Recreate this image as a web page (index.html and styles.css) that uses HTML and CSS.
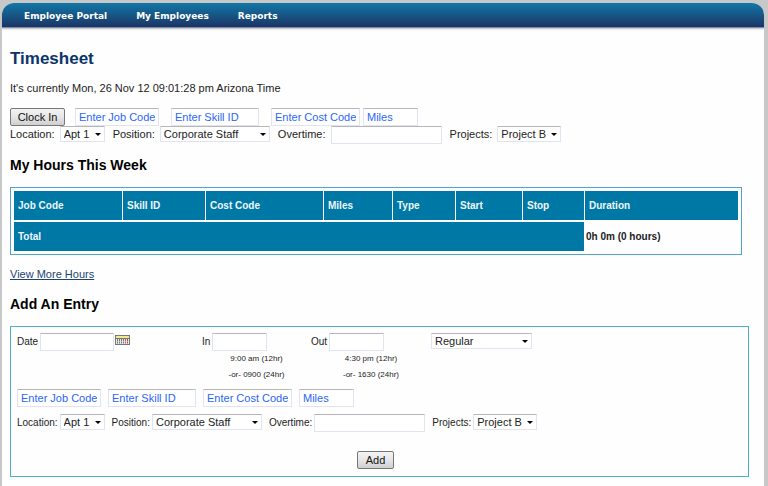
FILE: index.html
```html
<!DOCTYPE html>
<html lang="en">

<head>
  <meta charset="UTF-8">
  <title>Timesheet</title>
  <link rel="stylesheet" href="styles.css">
</head>

<body>
  <div class="page">
    <nav class="nav">
      <a href="#">Employee Portal</a>
      <a href="#">My Employees</a>
      <a href="#">Reports</a>
    </nav>

    <main class="content">
      <h1>Timesheet</h1>
      <p class="clock">It's currently Mon, 26 Nov 12 09:01:28 pm Arizona Time</p>

      <form class="clock-form">
        <div class="row">
          <button type="button" class="btn btn-clock">Clock In</button>
          <input type="text" class="field job" placeholder="Enter Job Code" aria-label="Job Code">
          <input type="text" class="field skill" placeholder="Enter Skill ID" aria-label="Skill ID">
          <input type="text" class="field cost" placeholder="Enter Cost Code" aria-label="Cost Code">
          <input type="text" class="field miles" placeholder="Miles" aria-label="Miles">
        </div>
        <div class="row options">
          <div class="option">
            <label for="location">Location:</label>
            <span class="select location"><select id="location"><option>Apt 1</option></select></span>
          </div>
          <div class="option">
            <label for="position">Position:</label>
            <span class="select position"><select id="position"><option>Corporate Staff</option></select></span>
          </div>
          <div class="option">
            <label for="overtime">Overtime:</label>
            <input type="text" class="field overtime" id="overtime">
          </div>
          <div class="option">
            <label for="project">Projects:</label>
            <span class="select project"><select id="project"><option>Project B</option></select></span>
          </div>
        </div>
      </form>

      <h2>My Hours This Week</h2>
      <table class="hours">
        <thead>
          <tr>
            <th class="col-job">Job Code</th>
            <th class="col-skill">Skill ID</th>
            <th class="col-cost">Cost Code</th>
            <th class="col-miles">Miles</th>
            <th class="col-type">Type</th>
            <th class="col-start">Start</th>
            <th class="col-stop">Stop</th>
            <th>Duration</th>
          </tr>
        </thead>
        <tbody>
          <tr>
            <th colspan="7">Total</th>
            <td>0h 0m (0 hours)</td>
          </tr>
        </tbody>
      </table>
      <p class="more"><a href="#">View More Hours</a></p>

      <h2>Add An Entry</h2>
      <form class="entry">
        <div class="times">
          <div class="time date">
            <label for="date">Date</label>
            <input type="text" class="field" id="date">
            <svg class="calendar" width="15" height="11" viewBox="0 0 15 11" aria-hidden="true">
              <rect x="0.5" y="0.5" width="14" height="9" fill="#ece8e8" stroke="#777"/>
              <rect x="1" y="1" width="13" height="2" fill="#f0eb90"/>
              <path d="M1 3.5H14" stroke="#777"/>
              <path d="M2 5H12M2 7.5H12" stroke="#777" stroke-width="2" stroke-dasharray="1 1"/>
              <path d="M12 5H13M12 7.5H13" stroke="#e33" stroke-width="2"/>
            </svg>
          </div>
          <div class="time">
            <label for="in">In</label>
            <input type="text" class="field" id="in">
            <p class="hint">9:00 am (12hr)<br>-or- 0900 (24hr)</p>
          </div>
          <div class="time">
            <label for="out">Out</label>
            <input type="text" class="field" id="out">
            <p class="hint">4:30 pm (12hr)<br>-or- 1630 (24hr)</p>
          </div>
          <div class="time">
            <span class="select type"><select aria-label="Type"><option>Regular</option></select></span>
          </div>
        </div>

        <div class="row codes">
          <input type="text" class="field job" placeholder="Enter Job Code" aria-label="Job Code">
          <input type="text" class="field skill" placeholder="Enter Skill ID" aria-label="Skill ID">
          <input type="text" class="field cost" placeholder="Enter Cost Code" aria-label="Cost Code">
          <input type="text" class="field miles" placeholder="Miles" aria-label="Miles">
        </div>

        <div class="row options">
          <div class="option">
            <label for="entry-location">Location:</label>
            <span class="select location"><select id="entry-location"><option>Apt 1</option></select></span>
          </div>
          <div class="option">
            <label for="entry-position">Position:</label>
            <span class="select position"><select id="entry-position"><option>Corporate Staff</option></select></span>
          </div>
          <div class="option">
            <label for="entry-overtime">Overtime:</label>
            <input type="text" class="field overtime" id="entry-overtime">
          </div>
          <div class="option">
            <label for="entry-project">Projects:</label>
            <span class="select project"><select id="entry-project"><option>Project B</option></select></span>
          </div>
        </div>

        <div class="actions">
          <button type="button" class="btn">Add</button>
        </div>
      </form>
    </main>
  </div>
</body>

</html>
```
FILE: styles.css
```css
* {
  box-sizing: border-box;
}

body {
  background-color: #c8c8c8;
  color: #222;
  font-family: "Liberation Sans", Arial, sans-serif;
  font-size: 11px;
  line-height: 16px;
  margin: 0;
  padding: 3px 4px 0 2px;
}

.page {
  background: #fefefe;
  border-radius: 12px 12px 0 0;
  min-height: calc(100vh - 3px);
}

.nav {
  display: flex;
  gap: 29px;
  padding: 0 22px;
  height: 25px;
  background: linear-gradient(#1278a8, #1b3464);
  border-bottom: 1px solid #7c8bab;
  border-radius: 12px 12px 0 0;
  box-shadow: 0 1px 2px #bbb;
}

.nav a {
  color: #fff;
  font-family: "DejaVu Sans", Verdana, sans-serif;
  font-size: 9px;
  font-weight: bold;
  line-height: 26px;
  text-decoration: none;
}

.content {
  padding: 20px 15px 8px 8px;
}

h1 {
  color: #0b3468;
  font-size: 17px;
  line-height: 22px;
  margin: 0 0 10px;
}

h2 {
  color: #000;
  font-size: 14px;
  line-height: 18px;
  margin: 12px 0 13px;
}

p {
  margin: 0;
}

.clock {
  margin-bottom: 12px;
}

.row {
  display: flex;
}

.field {
  height: 18px;
  padding: 0 3px;
  background: #fff;
  border: 1px solid #dfe4ee;
  border-top-color: #b4b6bc;
  border-radius: 1px;
  color: #222;
  font: inherit;
}

.field::placeholder {
  color: #2b66f6;
  opacity: 1;
}

.job { width: 84px; }
.skill { width: 88px; }
.cost { width: 89px; }
.miles { width: 55px; }
.overtime { width: 111px; }

.btn {
  height: 18px;
  padding: 0 8px;
  background: linear-gradient(#f3f3f3, #e6e6e6 50%, #cfcfcf);
  border: 1px solid #777;
  border-radius: 2px;
  color: #111;
  font: inherit;
  line-height: 16px;
}

.btn-clock {
  width: 55px;
  padding: 0;
}

.clock-form .job { margin-left: 10px; }
.clock-form .skill,
.clock-form .cost { margin-left: 12px; }
.clock-form .miles { margin-left: 3px; }

.options {
  gap: 7px;
}

.option {
  display: flex;
  align-items: flex-start;
  gap: 2px;
}

.clock-form .options {
  gap: 8px;
}

.clock-form .option {
  gap: 5px;
}

.select {
  display: inline-block;
  position: relative;
}

.select select {
  display: block;
  width: 100%;
  height: 16px;
  padding: 0 3px;
  appearance: none;
  background: #fff;
  border: 1px solid #dfe4ee;
  border-top-color: #b4b6bc;
  border-radius: 1px;
  color: #222;
  font-family: inherit;
  font-size: 11px;
}

.select::after {
  content: "";
  position: absolute;
  top: 7px;
  right: 4px;
  border: 3px solid transparent;
  border-top-color: #000;
  border-bottom: 0;
  pointer-events: none;
}

.location { width: 45px; }
.position { width: 110px; }
.project { width: 64px; }
.type { width: 101px; }

.hours {
  width: 99%;
  padding: 1px 2px;
  border: 1px solid #4fa6c4;
  border-spacing: 1px 2px;
  table-layout: fixed;
  font-size: 10px;
}

.hours th {
  height: 29px;
  padding: 0 4px;
  background: #0078a6;
  color: #eef6fa;
  text-align: left;
}

.hours td {
  padding: 0 1px;
  font-weight: bold;
}

.hours .col-job { width: 108px; }
.hours .col-skill { width: 82px; }
.hours .col-cost { width: 117px; }
.hours .col-miles { width: 68px; }
.hours .col-type { width: 62px; }
.hours .col-start { width: 66px; }
.hours .col-stop { width: 61px; }

.more {
  margin: 11px 0 13px;
}

.more a {
  color: #1d4373;
}

.entry {
  padding: 6px 14px 7px 6px;
  border: 1px solid #4fb0cc;
}

.entry label {
  font-size: 10px;
  line-height: 18px;
}

.times {
  display: grid;
  grid-template-columns: 185fr 109fr 120fr 303fr;
}

.time .field {
  width: 55px;
}

.time {
  display: grid;
  grid-template-columns: auto auto 1fr;
  column-gap: 2px;
  align-content: start;
}

.date .field {
  width: 74px;
}

.calendar {
  margin: 2px 0 0 -1px;
}

.hint {
  grid-column: 1 / -1;
  font-size: 8px;
  line-height: 16px;
  text-align: center;
}

.codes {
  gap: 7px;
  margin-top: 6px;
}

.entry .options {
  margin-top: 7px;
}

.actions {
  margin-top: 19px;
  text-align: center;
}
```
